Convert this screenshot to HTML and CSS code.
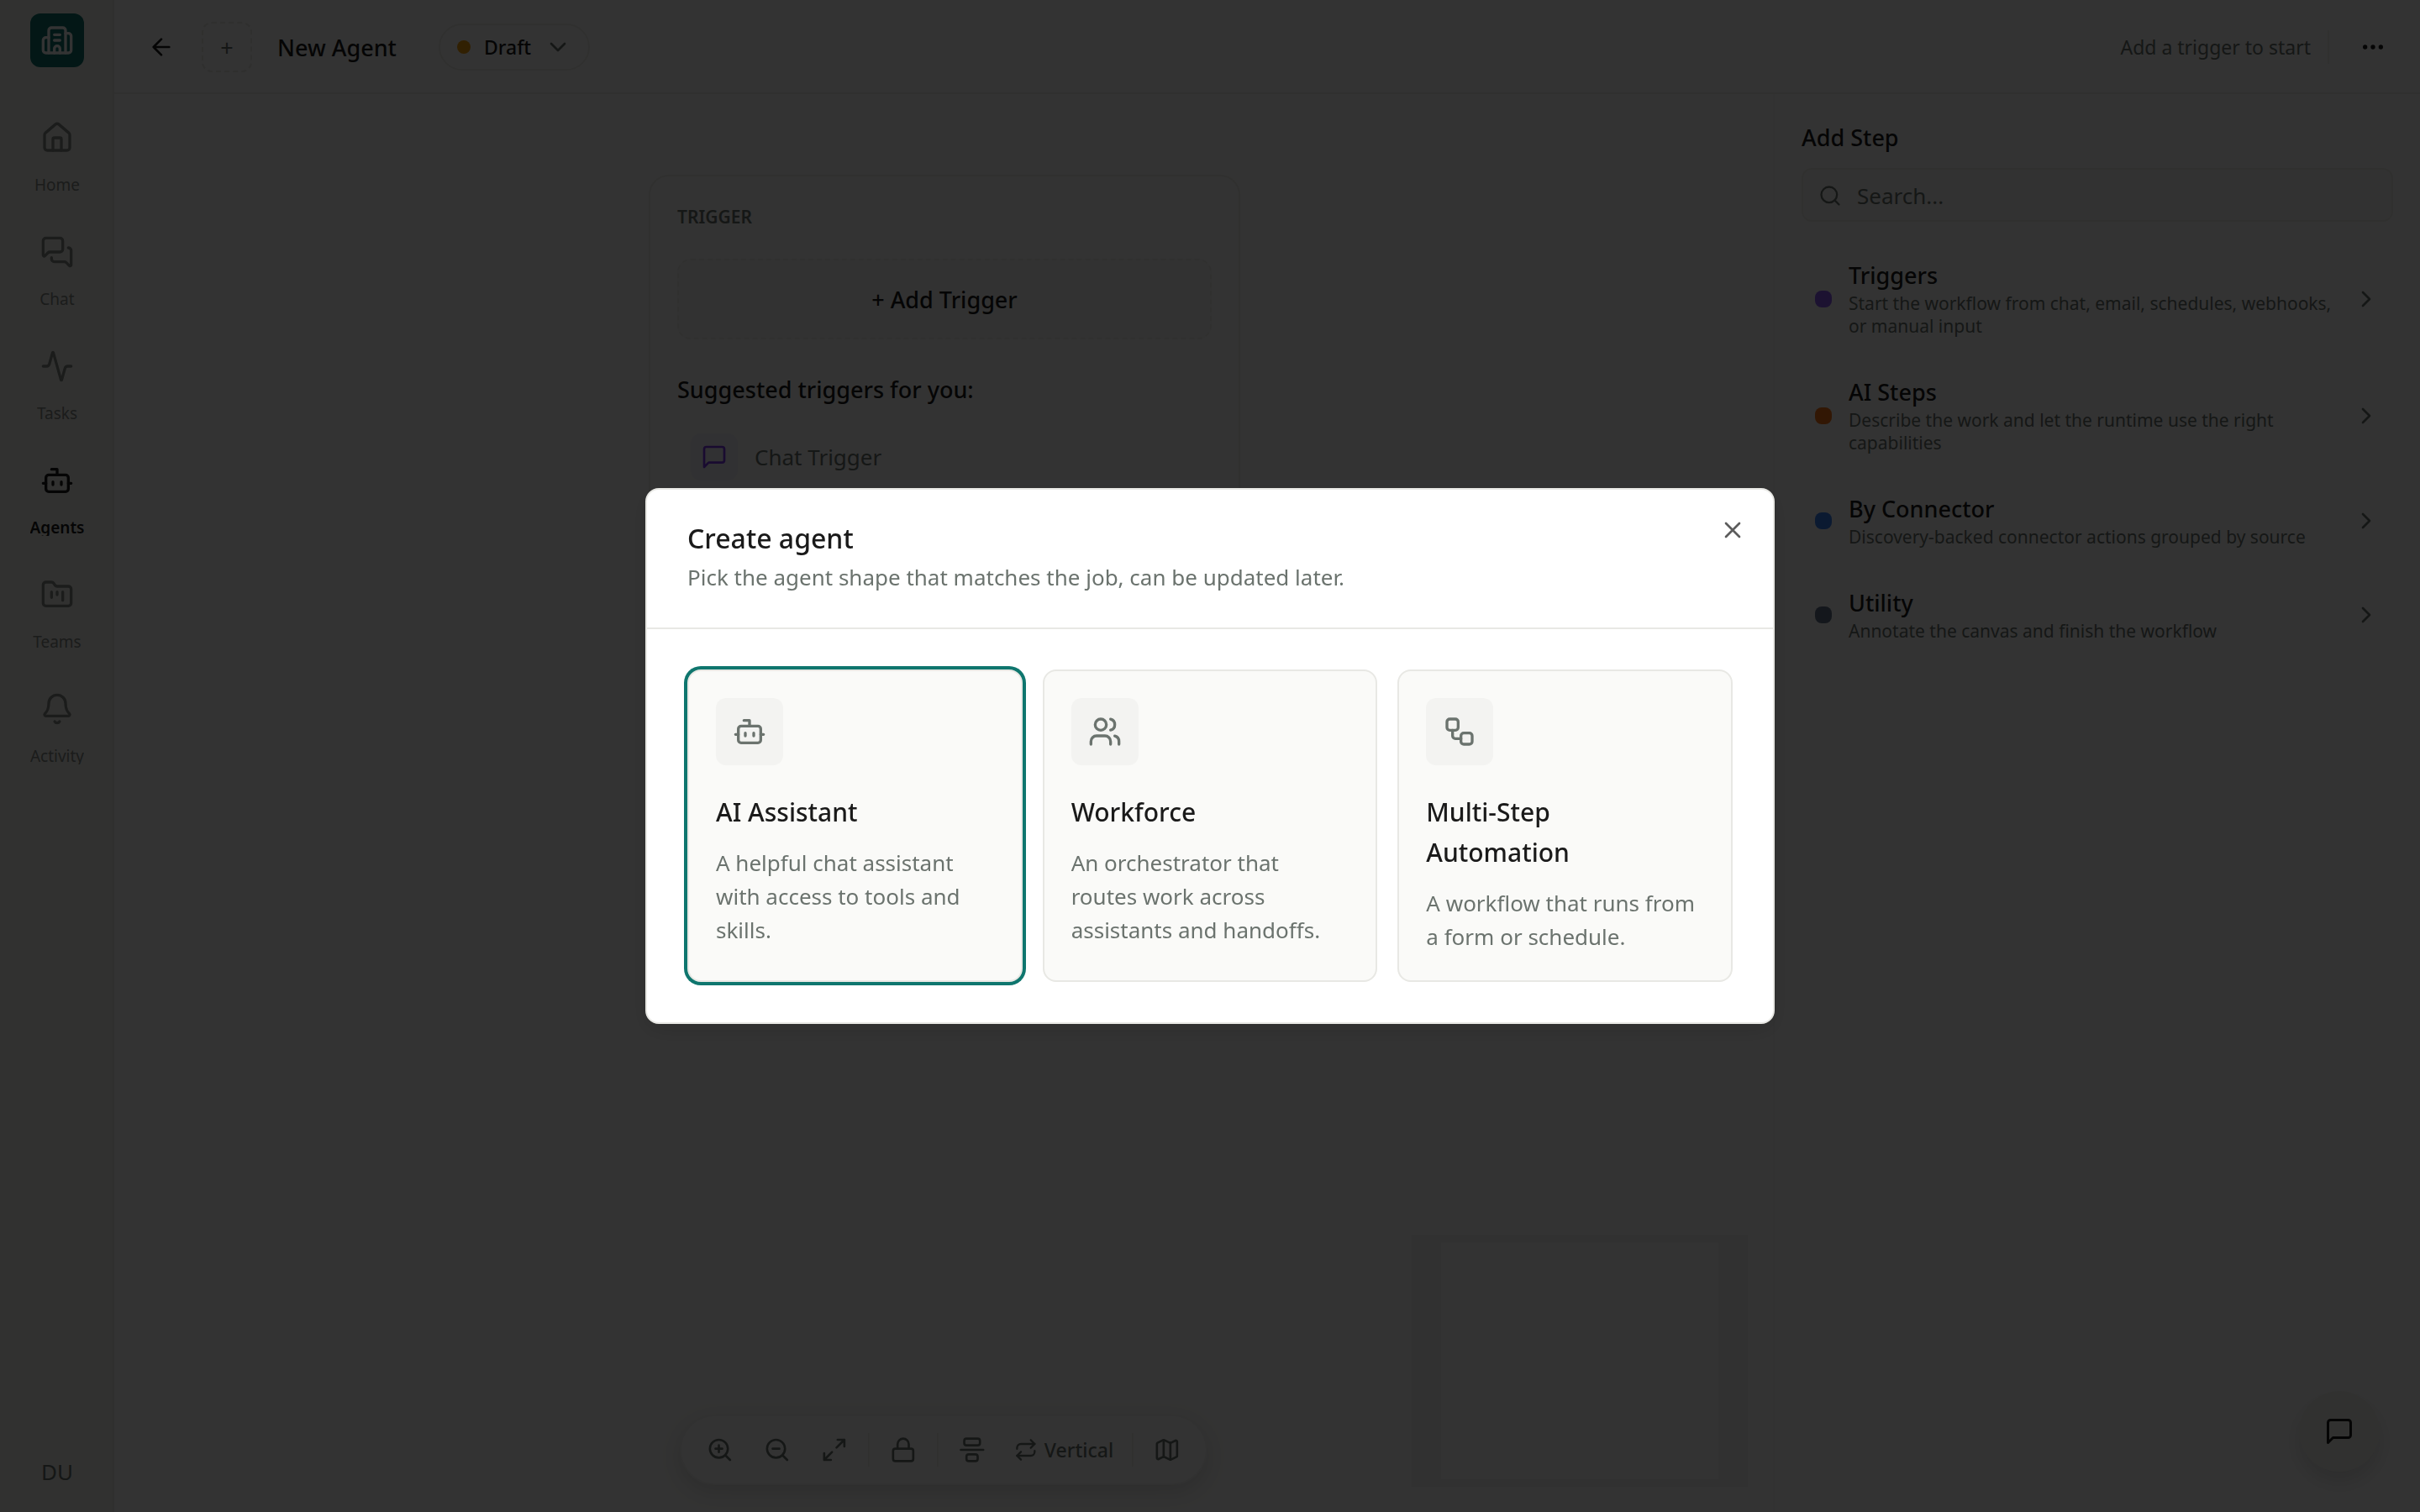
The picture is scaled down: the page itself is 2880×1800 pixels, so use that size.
FILE: index.html
```html
<!DOCTYPE html>
<html lang="en">
<head>
<meta charset="utf-8">
<title>New Agent</title>
<meta name="viewport" content="width=device-width, initial-scale=1">
<link rel="stylesheet" href="styles.css">
</head>
<body>
<div class="app">
  <aside class="sidebar">
    <a class="logo" href="#" aria-label="Workspace">
      <svg class="icon icon-lg" viewBox="0 0 24 24"><path d="M10 12h4M10 8h4M14 21v-3a2 2 0 0 0-4 0v3"/><path d="M6 10H4a2 2 0 0 0-2 2v7a2 2 0 0 0 2 2h16a2 2 0 0 0 2-2V9a2 2 0 0 0-2-2h-2"/><path d="M6 21V5a2 2 0 0 1 2-2h8a2 2 0 0 1 2 2v16"/></svg>
    </a>
    <nav class="nav">
      <a class="nav-item" href="#">
        <svg class="icon icon-lg" viewBox="0 0 24 24"><path d="M15 21v-8a1 1 0 0 0-1-1h-4a1 1 0 0 0-1 1v8"/><path d="M3 10a2 2 0 0 1 .709-1.528l7-5.999a2 2 0 0 1 2.582 0l7 5.999A2 2 0 0 1 21 10v9a2 2 0 0 1-2 2H5a2 2 0 0 1-2-2z"/></svg>
        <span class="nav-label">Home</span>
      </a>
      <a class="nav-item" href="#">
        <svg class="icon icon-lg" viewBox="0 0 24 24"><path d="M16 10a2 2 0 0 1-2 2H6.828a2 2 0 0 0-1.414.586l-2.202 2.202A.71.71 0 0 1 2 14.286V4a2 2 0 0 1 2-2h10a2 2 0 0 1 2 2z"/><path d="M20 9a2 2 0 0 1 2 2v10.286a.71.71 0 0 1-1.212.502l-2.202-2.202A2 2 0 0 0 17.172 19H10a2 2 0 0 1-2-2v-1"/></svg>
        <span class="nav-label">Chat</span>
      </a>
      <a class="nav-item" href="#">
        <svg class="icon icon-lg" viewBox="0 0 24 24"><path d="M22 12h-2.48a2 2 0 0 0-1.93 1.46l-2.35 8.36a.25.25 0 0 1-.48 0L9.24 2.18a.25.25 0 0 0-.48 0l-2.35 8.36A2 2 0 0 1 4.49 12H2"/></svg>
        <span class="nav-label">Tasks</span>
      </a>
      <a class="nav-item is-active" href="#" aria-current="page">
        <svg class="icon icon-lg" viewBox="0 0 24 24"><path d="M12 8V4H8"/><rect width="16" height="12" x="4" y="8" rx="2"/><path d="M2 14h2M20 14h2M15 13v2M9 13v2"/></svg>
        <span class="nav-label">Agents</span>
      </a>
      <a class="nav-item" href="#">
        <svg class="icon icon-lg" viewBox="0 0 24 24"><path d="M4 20h16a2 2 0 0 0 2-2V8a2 2 0 0 0-2-2h-7.93a2 2 0 0 1-1.66-.9l-.82-1.2A2 2 0 0 0 7.93 3H4a2 2 0 0 0-2 2v13c0 1.1.9 2 2 2Z"/><path d="M8 10v4M12 10v2M16 10v6"/></svg>
        <span class="nav-label">Teams</span>
      </a>
      <a class="nav-item" href="#">
        <svg class="icon icon-lg" viewBox="0 0 24 24"><path d="M10.268 21a2 2 0 0 0 3.464 0"/><path d="M3.262 15.326A1 1 0 0 0 4 17h16a1 1 0 0 0 .74-1.673C19.41 13.956 18 12.499 18 8A6 6 0 0 0 6 8c0 4.499-1.411 5.956-2.738 7.326"/></svg>
        <span class="nav-label">Activity</span>
      </a>
    </nav>
    <button class="user" type="button">DU</button>
  </aside>

  <header class="topbar">
    <button class="icon-btn" type="button" aria-label="Back">
      <svg class="icon icon-md" viewBox="0 0 24 24"><path d="m12 19-7-7 7-7M19 12H5"/></svg>
    </button>
    <button class="avatar-btn" type="button" aria-label="Set icon">+</button>
    <h1 class="page-title">New Agent</h1>
    <button class="status" type="button">
      <span class="status-dot"></span>
      <span>Draft</span>
      <svg class="icon icon-md" viewBox="0 0 24 24"><path d="m6 9 6 6 6-6"/></svg>
    </button>
    <div class="topbar-end">
      <span class="hint">Add a trigger to start</span>
      <span class="topbar-rule"></span>
      <button class="icon-btn" type="button" aria-label="More">
        <svg class="icon icon-md" viewBox="0 0 24 24"><circle cx="12" cy="12" r="1"/><circle cx="19" cy="12" r="1"/><circle cx="5" cy="12" r="1"/></svg>
      </button>
    </div>
  </header>

  <main class="canvas">
    <section class="trigger-card">
      <h2 class="eyebrow">TRIGGER</h2>
      <button class="add-trigger" type="button">+ Add Trigger</button>
      <h3 class="suggest-title">Suggested triggers for you:</h3>
      <button class="suggestion" type="button">
        <span class="suggestion-icon"><svg class="icon icon-md" viewBox="0 0 24 24"><path d="M21 15a2 2 0 0 1-2 2H7l-4 4V5a2 2 0 0 1 2-2h14a2 2 0 0 1 2 2z"/></svg></span>
        <span>Chat Trigger</span>
      </button>
    </section>

    <div class="minimap"><div class="minimap-view"></div></div>

    <div class="toolbar" role="toolbar" aria-label="Canvas controls">
      <button class="tool" type="button" aria-label="Zoom in"><svg class="icon icon-md" viewBox="0 0 24 24"><circle cx="11" cy="11" r="8"/><path d="m21 21-4.35-4.35M11 8v6M8 11h6"/></svg></button>
      <button class="tool" type="button" aria-label="Zoom out"><svg class="icon icon-md" viewBox="0 0 24 24"><circle cx="11" cy="11" r="8"/><path d="m21 21-4.35-4.35M8 11h6"/></svg></button>
      <button class="tool" type="button" aria-label="Fit view"><svg class="icon icon-md" viewBox="0 0 24 24"><path d="M15 3h6v6M21 3l-7 7M3 21l7-7M9 21H3v-6"/></svg></button>
      <span class="tool-rule"></span>
      <button class="tool" type="button" aria-label="Lock"><svg class="icon icon-md" viewBox="0 0 24 24"><rect width="18" height="11" x="3" y="11" rx="2"/><path d="M7 11V7a5 5 0 0 1 10 0v4"/></svg></button>
      <span class="tool-rule"></span>
      <button class="tool" type="button" aria-label="Align"><svg class="icon icon-md" viewBox="0 0 24 24"><rect width="14" height="6" x="5" y="2" rx="2"/><rect width="10" height="6" x="7" y="16" rx="2"/><path d="M2 12h20"/></svg></button>
      <button class="tool tool-text" type="button"><svg class="icon icon-sm" viewBox="0 0 24 24"><path d="m17 2 4 4-4 4"/><path d="M3 11v-1a4 4 0 0 1 4-4h14M7 22l-4-4 4-4"/><path d="M21 13v1a4 4 0 0 1-4 4H3"/></svg>Vertical</button>
      <span class="tool-rule"></span>
      <button class="tool" type="button" aria-label="Toggle map"><svg class="icon icon-md" viewBox="0 0 24 24"><path d="M14.106 5.553a2 2 0 0 0 1.788 0l3.659-1.83A1 1 0 0 1 21 4.619v12.764a1 1 0 0 1-.553.894l-4.553 2.277a2 2 0 0 1-1.788 0l-4.212-2.106a2 2 0 0 0-1.788 0l-3.659 1.83A1 1 0 0 1 3 19.381V6.618a1 1 0 0 1 .553-.894l4.553-2.277a2 2 0 0 1 1.788 0z"/><path d="M15 5.764v15M9 3.236v15"/></svg></button>
    </div>
  </main>

  <aside class="panel">
    <h2 class="panel-title">Add Step</h2>
    <label class="search">
      <svg class="icon icon-sm" viewBox="0 0 24 24"><circle cx="11" cy="11" r="8"/><path d="m21 21-4.35-4.35"/></svg>
      <input class="search-input" type="text" placeholder="Search..." aria-label="Search steps">
    </label>
    <div class="steps">
      <button class="step" type="button">
        <span class="step-dot dot-violet"></span>
        <span class="step-text"><span class="step-name">Triggers</span><span class="step-desc">Start the workflow from chat, email, schedules, webhooks, or manual input</span></span>
        <svg class="icon icon-md" viewBox="0 0 24 24"><path d="m9 18 6-6-6-6"/></svg>
      </button>
      <button class="step" type="button">
        <span class="step-dot dot-orange"></span>
        <span class="step-text"><span class="step-name">AI Steps</span><span class="step-desc">Describe the work and let the runtime use the right capabilities</span></span>
        <svg class="icon icon-md" viewBox="0 0 24 24"><path d="m9 18 6-6-6-6"/></svg>
      </button>
      <button class="step" type="button">
        <span class="step-dot dot-blue"></span>
        <span class="step-text"><span class="step-name">By Connector</span><span class="step-desc">Discovery-backed connector actions grouped by source</span></span>
        <svg class="icon icon-md" viewBox="0 0 24 24"><path d="m9 18 6-6-6-6"/></svg>
      </button>
      <button class="step" type="button">
        <span class="step-dot dot-slate"></span>
        <span class="step-text"><span class="step-name">Utility</span><span class="step-desc">Annotate the canvas and finish the workflow</span></span>
        <svg class="icon icon-md" viewBox="0 0 24 24"><path d="m9 18 6-6-6-6"/></svg>
      </button>
    </div>
  </aside>
</div>

<button class="chat-fab" type="button" aria-label="Open chat">
  <svg class="icon icon-fab" viewBox="0 0 24 24"><path d="M21 15a2 2 0 0 1-2 2H7l-4 4V5a2 2 0 0 1 2-2h14a2 2 0 0 1 2 2z"/></svg>
</button>

<div class="backdrop">
  <section class="modal" role="dialog" aria-modal="true" aria-labelledby="modal-title">
    <header class="modal-head">
      <h2 class="modal-title" id="modal-title">Create agent</h2>
      <p class="modal-sub">Pick the agent shape that matches the job, can be updated later.</p>
      <button class="modal-close" type="button" aria-label="Close">
        <svg class="icon icon-md" viewBox="0 0 24 24"><path d="M18 6 6 18M6 6l12 12"/></svg>
      </button>
    </header>
    <div class="choices">
      <button class="choice is-selected" type="button">
        <span class="choice-icon"><svg class="icon icon-lg" viewBox="0 0 24 24"><path d="M12 8V4H8"/><rect width="16" height="12" x="4" y="8" rx="2"/><path d="M2 14h2M20 14h2M15 13v2M9 13v2"/></svg></span>
        <span class="choice-name">AI Assistant</span>
        <span class="choice-desc">A helpful chat assistant with access to tools and skills.</span>
      </button>
      <button class="choice" type="button">
        <span class="choice-icon"><svg class="icon icon-lg" viewBox="0 0 24 24"><path d="M16 21v-2a4 4 0 0 0-4-4H6a4 4 0 0 0-4 4v2"/><path d="M16 3.128a4 4 0 0 1 0 7.744M22 21v-2a4 4 0 0 0-3-3.87"/><circle cx="9" cy="7" r="4"/></svg></span>
        <span class="choice-name">Workforce</span>
        <span class="choice-desc">An orchestrator that routes work across assistants and handoffs.</span>
      </button>
      <button class="choice" type="button">
        <span class="choice-icon"><svg class="icon icon-lg" viewBox="0 0 24 24"><rect width="8" height="8" x="3" y="3" rx="2"/><path d="M7 11v4a2 2 0 0 0 2 2h4"/><rect width="8" height="8" x="13" y="13" rx="2"/></svg></span>
        <span class="choice-name">Multi-Step Automation</span>
        <span class="choice-desc">A workflow that runs from a form or schedule.</span>
      </button>
    </div>
  </section>
</div>
</body>
</html>
```
FILE: styles.css
```css
:root {
  --ink: #1a1a1a;
  --muted: #6b736e;
  --line: #e8e8e4;
  --soft: #fafaf8;
  --teal: #0f766e;
}

* { box-sizing: border-box; }

body {
  margin: 0;
  background: #fff;
  color: var(--ink);
  font-family: "Segoe UI", "Noto Sans", sans-serif;
  font-size: 26px;
}

h1, h2, h3, p { margin: 0; }
a { color: inherit; text-decoration: none; }

button {
  margin: 0;
  padding: 0;
  border: 0;
  background: none;
  color: inherit;
  font: inherit;
  cursor: pointer;
}

.icon {
  flex: none;
  fill: none;
  stroke: currentColor;
  stroke-width: 2;
  stroke-linecap: round;
  stroke-linejoin: round;
}
.icon-sm { width: 28px; height: 28px; }
.icon-md { width: 32px; height: 32px; }
.icon-fab { width: 36px; height: 36px; }
.icon-lg { width: 40px; height: 40px; }

/* App shell */
.app {
  display: grid;
  grid-template: 112px 1fr / 136px 1fr 770px;
  min-height: 100vh;
}

.sidebar {
  grid-row: 1 / 3;
  display: flex;
  flex-direction: column;
  align-items: center;
  padding: 16px 0 24px;
  background: #f5f5f0;
  box-shadow: inset -2px 0 var(--line);
}
.logo {
  display: grid;
  place-items: center;
  width: 64px;
  height: 64px;
  border-radius: 12px;
  background: var(--teal);
  color: #fff;
}
.nav {
  display: flex;
  flex-direction: column;
  gap: 26px;
  margin-top: 40px;
}
.nav-item {
  display: flex;
  flex-direction: column;
  align-items: center;
  padding-top: 24px;
  gap: 26px;
  color: #868b88;
}
.nav-label {
  overflow: hidden;
  font-size: 19px;
  line-height: 20px;
}
.nav-item.is-active { color: var(--ink); }
.is-active .nav-label { font-weight: 600; }
.user {
  margin-top: auto;
  color: var(--muted);
  font-size: 26px;
  line-height: 48px;
}

/* Top bar */
.topbar {
  grid-column: 2 / 4;
  display: flex;
  align-items: center;
  padding: 0 40px;
  box-shadow: inset 0 -2px #f0f0ec;
}
.icon-btn { display: grid; }
.avatar-btn {
  width: 60px;
  height: 60px;
  margin: 0 30px 0 32px;
  border: 2px dashed var(--line);
  border-radius: 12px;
  color: var(--muted);
  font-size: 27px;
}
.page-title {
  font-size: 27px;
  font-weight: 500;
}
.status {
  display: flex;
  align-items: center;
  gap: 16px;
  height: 56px;
  margin-left: 50px;
  padding: 0 20px;
  border: 2px solid #f0f0ec;
  border-radius: 28px;
  font-size: 23px;
  font-weight: 500;
}
.status .icon { color: var(--muted); }
.status-dot {
  width: 16px;
  height: 16px;
  border-radius: 50%;
  background: #f59e0b;
}
.topbar-end {
  display: flex;
  align-items: center;
  gap: 20px;
  margin-left: auto;
}
.hint { color: var(--muted); font-size: 23px; }
.topbar-rule {
  width: 2px;
  height: 40px;
  margin-right: 16px;
  background: #f0f0ec;
}

/* Canvas */
.canvas {
  position: relative;
  background: #fdfdfc;
}
.trigger-card {
  position: absolute;
  top: 96px;
  left: 636px;
  width: 704px;
  padding: 32px;
  border: 2px solid #f0f0ec;
  border-radius: 24px;
  background: #fff;
}
.eyebrow {
  color: var(--muted);
  font-size: 21px;
  font-weight: 600;
  line-height: 32px;
}
.add-trigger {
  display: block;
  width: 100%;
  height: 96px;
  margin-top: 34px;
  border: 2px dashed #f0f0ec;
  border-radius: 16px;
  background: var(--soft);
  font-size: 27px;
  font-weight: 500;
}
.suggest-title {
  margin-top: 40px;
  font-size: 27px;
  font-weight: 500;
  line-height: 40px;
}
.suggestion {
  display: flex;
  align-items: center;
  gap: 20px;
  width: 100%;
  margin-top: 32px;
  padding: 0 16px;
  color: var(--muted);
  font-size: 26px;
}
.suggestion-icon {
  display: grid;
  place-items: center;
  width: 56px;
  height: 56px;
  border-radius: 12px;
  background: #f5f3ff;
  color: #7c3aed;
}

.minimap {
  position: absolute;
  right: 30px;
  bottom: 30px;
  width: 400px;
  height: 300px;
  padding: 9px 35px;
  background: #f5f5f5;
}
.minimap-view { height: 100%; background: #fff; }

.toolbar {
  position: absolute;
  bottom: 32px;
  left: 50%;
  display: flex;
  align-items: center;
  gap: 8px;
  height: 84px;
  padding: 0 16px;
  border: 2px solid #f5f5f2;
  border-radius: 42px;
  background: #fff;
  box-shadow: 0 8px 24px rgba(0, 0, 0, 0.12);
  transform: translateX(-50%);
  color: var(--muted);
}
.tool {
  display: flex;
  align-items: center;
  justify-content: center;
  gap: 8px;
  width: 60px;
  height: 60px;
}
.tool-text {
  width: auto;
  padding: 0 12px;
  font-size: 23px;
  font-weight: 500;
}
.tool-rule {
  width: 2px;
  height: 40px;
  margin: 0 2px;
  background: #f0f0ec;
}

/* Step panel */
.panel {
  padding: 32px;
  border-left: 2px solid #fafaf8;
}
.panel-title {
  font-size: 27px;
  font-weight: 500;
  line-height: 40px;
}
.search {
  display: flex;
  align-items: center;
  gap: 18px;
  height: 64px;
  margin-top: 16px;
  padding: 2px 18px 0;
  border: 2px solid #f0f0ec;
  border-radius: 12px;
  background: var(--soft);
  color: var(--muted);
}
.search-input {
  flex: 1;
  min-width: 0;
  padding: 0;
  border: 0;
  outline: 0;
  background: none;
  color: inherit;
  font: inherit;
  font-size: 26px;
}
.search-input::placeholder { color: inherit; opacity: 1; }
.steps {
  display: flex;
  flex-direction: column;
  gap: 8px;
  margin-top: 26px;
}
.step {
  display: flex;
  align-items: center;
  gap: 20px;
  padding: 19px 16px;
  text-align: left;
}
.step .icon { color: var(--muted); }
.step-dot {
  flex: none;
  width: 20px;
  height: 20px;
  border-radius: 8px;
}
.dot-violet { background: #8b5cf6; }
.dot-orange { background: #f97316; }
.dot-blue { background: #3b82f6; }
.dot-slate { background: #64748b; }
.step-text {
  display: flex;
  flex: 1;
  flex-direction: column;
  gap: 1px;
}
.step-name {
  font-size: 27px;
  font-weight: 500;
  line-height: 38px;
}
.step-desc {
  color: var(--muted);
  font-size: 21px;
  line-height: 27px;
}

.chat-fab {
  position: fixed;
  right: 48px;
  bottom: 48px;
  display: grid;
  place-items: center;
  width: 96px;
  height: 96px;
  border-radius: 50%;
  background: #f5f5f0;
  box-shadow: 0 12px 24px rgba(0, 0, 0, 0.12);
}

/* Create agent dialog */
.backdrop {
  position: fixed;
  inset: 0;
  display: grid;
  place-items: center;
  background: rgba(0, 0, 0, 0.8);
}
.modal {
  position: relative;
  width: 1344px;
  max-width: 100%;
  border: 2px solid var(--line);
  border-radius: 16px;
  background: #fff;
  box-shadow: 0 8px 24px rgba(0, 0, 0, 0.12);
}
.modal-head {
  padding: 40px 48px;
  border-bottom: 2px solid var(--line);
}
.modal-title {
  font-size: 32px;
  font-weight: 500;
  line-height: 36px;
}
.modal-sub {
  margin-top: 8px;
  color: var(--muted);
  font-size: 26px;
  line-height: 40px;
}
.modal-close {
  position: absolute;
  top: 24px;
  right: 24px;
  display: grid;
  place-items: center;
  width: 48px;
  height: 48px;
  color: #5c5c5c;
}
.choices {
  display: grid;
  grid-template-columns: repeat(3, 1fr);
  gap: 24px;
  padding: 48px;
}
.choice {
  display: flex;
  flex-direction: column;
  align-items: flex-start;
  padding: 32px;
  border: 2px solid var(--line);
  border-radius: 16px;
  background: var(--soft);
  text-align: left;
}
.choice.is-selected { box-shadow: 0 0 0 4px var(--teal); }
.choice-icon {
  display: grid;
  place-items: center;
  width: 80px;
  height: 80px;
  border-radius: 12px;
  background: #f3f3f1;
  color: var(--muted);
}
.choice-name {
  margin-top: 32px;
  padding-right: 16px;
  font-size: 30px;
  font-weight: 500;
  line-height: 48px;
}
.choice-desc {
  margin-top: 16px;
  color: var(--muted);
  font-size: 26px;
  line-height: 40px;
}
```
